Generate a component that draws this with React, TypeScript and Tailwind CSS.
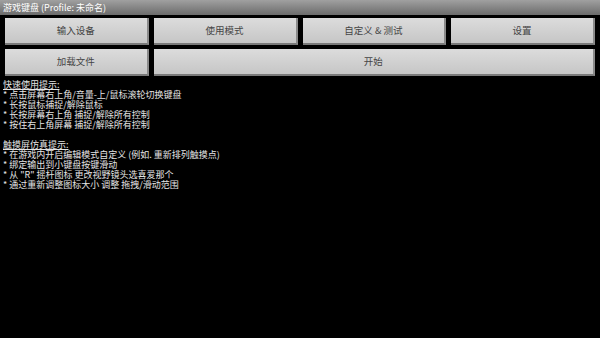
import React from "react";

const font = { fontFamily: '"Noto Sans CJK SC", "Noto Sans", sans-serif' };

function Btn({ label, className = "" }: { label: string; className?: string }) {
  return (
    <div
      className={
        "flex items-center justify-center h-[27px] bg-gradient-to-b from-[#dcdcdc] to-[#c6c6c6] border-b-2 border-r-2 border-b-[#7a7a7a] border-r-[#8a8a8a] text-[9.5px] leading-none text-[#454545] " +
        className
      }
    >
      {label}
    </div>
  );
}

export default function App() {
  const tips1 = [
    "* 点击屏幕右上角/音量-上/鼠标滚轮切换键盘",
    "* 长按鼠标捕捉/解除鼠标",
    "* 长按屏幕右上角 捕捉/解除所有控制",
    "* 按住右上角屏幕 捕捉/解除所有控制",
  ];
  const tips2 = [
    "* 在游戏内开启编辑模式自定义 (例如. 重新排列触摸点)",
    "* 绑定输出到小键盘按键滑动",
    "* 从 \"R\" 摇杆图标 更改视野镜头选喜爱那个",
    "* 通过重新调整图标大小 调整 拖拽/滑动范围",
  ];
  return (
    <div className="w-[600px] h-[338px] bg-black overflow-hidden" style={font}>
      <div className="h-[15px] bg-gradient-to-b from-[#a0a0a0] to-[#6c6c6c] flex items-center pl-[3px] text-[9px] leading-none text-white">
        游戏键盘 (Profile: 未命名)
      </div>
      <div className="grid grid-cols-4 gap-x-[5px] gap-y-[4px] pl-[5px] pr-[5px] pt-[3px]">
        <Btn label="输入设备" />
        <Btn label="使用模式" />
        <Btn label="自定义 & 测试" />
        <Btn label="设置" />
        <Btn label="加载文件" />
        <Btn label="开始" className="col-span-3" />
      </div>
      <div className="pt-[4px] pl-[3px] text-[9px] leading-[10px] text-[#e4e4e4]">
        <div className="underline h-[10px]">快速使用提示:</div>
        {tips1.map((t) => (
          <div key={t} className="h-[10px]">{t}</div>
        ))}
        <div className="h-[10px]" />
        <div className="underline h-[10px]">触摸屏仿真提示:</div>
        {tips2.map((t) => (
          <div key={t} className="h-[10px]">{t}</div>
        ))}
      </div>
    </div>
  );
}
